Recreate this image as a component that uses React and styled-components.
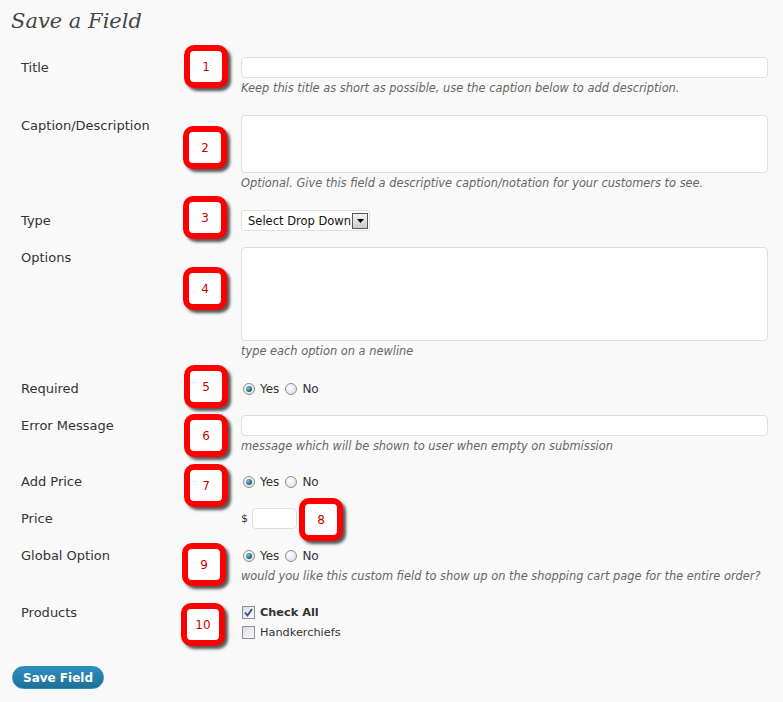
import React from 'react';
import styled, { createGlobalStyle } from 'styled-components';

const GlobalStyle = createGlobalStyle`
  html, body {
    margin: 0;
    padding: 0;
    background: #f9f9f9;
  }
  body {
    font-family: "DejaVu Sans", Verdana, sans-serif;
    color: #333;
  }
`;

const Wrap = styled.div`
  width: 783px;
  min-height: 702px;
  padding: 0 15px 0 11px;
  box-sizing: border-box;
  background: #f9f9f9;
`;

const Heading = styled.h2`
  margin: 0 0 13px;
  padding-top: 6px;
  font-family: "DejaVu Serif", Georgia, serif;
  font-style: italic;
  font-weight: normal;
  font-size: 21px;
  line-height: 30px;
  color: #464646;
`;

const Row = styled.div`
  position: relative;
  display: grid;
  grid-template-columns: 230px 1fr;
  padding: 8px 0;
`;

const Label = styled.div`
  padding: 1px 0 0 10px;
  font-size: 13px;
  line-height: 20px;
  color: #333;
`;

const Field = styled.div`
  display: flex;
  flex-direction: column;
  align-items: flex-start;
`;

const TextInput = styled.div`
  width: 100%;
  height: ${(p) => p.$h || 21}px;
  box-sizing: border-box;
  background: #fff;
  border: 1px solid #dfdfdf;
  border-radius: 4px;
`;

const Desc = styled.div`
  margin: 3px 0 ${(p) => (p.$mb ?? 3)}px;
  font-size: 11.4px;
  line-height: 15px;
  font-style: italic;
  color: #666;
`;

const Select = styled.div`
  display: flex;
  align-items: center;
  height: 21px;
  box-sizing: border-box;
  padding: 0 1px 0 6px;
  background: #fff;
  border: 1px solid #dfdfdf;
  border-radius: 3px;
  font-size: 11.5px;
  color: #111;
`;

const SelectArrow = styled.span`
  display: inline-flex;
  align-items: center;
  justify-content: center;
  width: 16px;
  height: 16px;
  margin-left: 1px;
  box-sizing: border-box;
  border: 1px solid #555;
  background: linear-gradient(#f2f2f2, #c9c9c9);
`;

const Choices = styled.div`
  display: flex;
  align-items: center;
  height: 21px;
  gap: 4px;
  font-size: 12px;
  color: #333;
`;

const Radio = styled.span`
  position: relative;
  display: inline-block;
  width: 12px;
  height: 12px;
  margin: 0 1px 0 2px;
  border-radius: 50%;
  border: 1px solid #8f8f8f;
  background: radial-gradient(circle at 40% 35%, #fff, #d8d8d8);
  box-sizing: border-box;

  &::after {
    content: '';
    display: ${(p) => (p.$on ? 'block' : 'none')};
    position: absolute;
    left: 2px;
    top: 2px;
    width: 6px;
    height: 6px;
    border-radius: 50%;
    background: radial-gradient(circle at 35% 35%, #7fc4dc, #1a5e78 70%);
  }
`;

const PriceLine = styled.div`
  display: flex;
  align-items: center;
  gap: 4px;
  font-size: 11px;
  color: #333;
`;

const SmallInput = styled.div`
  width: 45px;
  height: 21px;
  box-sizing: border-box;
  background: #fff;
  border: 1px solid #dfdfdf;
  border-radius: 4px;
`;

const CheckLine = styled.label`
  display: flex;
  align-items: center;
  gap: 5px;
  height: 20px;
  font-size: 11.3px;
  font-weight: ${(p) => (p.$bold ? 'bold' : 'normal')};
  color: #333;
`;

const Box = styled.span`
  display: inline-flex;
  align-items: center;
  justify-content: center;
  width: 13px;
  height: 13px;
  margin-left: 1px;
  box-sizing: border-box;
  border: 1px solid #8e8f9f;
  background: linear-gradient(135deg, #dcdde2, #fbfbfb);
`;

const Badge = styled.div`
  position: absolute;
  left: ${(p) => p.$x}px;
  top: ${(p) => p.$y}px;
  width: 44px;
  height: 43px;
  box-sizing: border-box;
  border: 6px solid #ff0000;
  border-radius: 10px;
  background: #fff;
  box-shadow: 3px 3px 3px rgba(0, 0, 0, 0.65);
  display: flex;
  align-items: center;
  justify-content: center;
  font-size: 12px;
  color: #cc0000;
`;

const SaveButton = styled.button`
  margin: 16px 0 0 1px;
  width: 92px;
  height: 23px;
  padding: 0;
  border: 1px solid #298cba;
  border-radius: 12px;
  background: linear-gradient(#2e8fbe, #1f6f98);
  color: #fff;
  font-family: "DejaVu Sans", Verdana, sans-serif;
  font-weight: bold;
  font-size: 12px;
  cursor: pointer;
`;

function Yn() {
  return (
    <Choices>
      <Radio $on />
      <span>Yes</span>
      <Radio />
      <span>No</span>
    </Choices>
  );
}

export default function App() {
  return (
    <Wrap>
      <GlobalStyle />
      <Heading>Save a Field</Heading>

      <Row>
        <Label>Title</Label>
        <Field>
          <TextInput />
          <Desc>Keep this title as short as possible, use the caption below to add description.</Desc>
        </Field>
        <Badge $x={173} $y={-4}>1</Badge>
      </Row>

      <Row>
        <Label>Caption/Description</Label>
        <Field>
          <TextInput $h={58} />
          <Desc>Optional. Give this field a descriptive caption/notation for your customers to see.</Desc>
        </Field>
        <Badge $x={172} $y={19}>2</Badge>
      </Row>

      <Row>
        <Label>Type</Label>
        <Field>
          <Select>
            Select Drop Down
            <SelectArrow>
              <svg width="7" height="4" viewBox="0 0 7 4">
                <path d="M0 0h7L3.5 4z" fill="#000" />
              </svg>
            </SelectArrow>
          </Select>
        </Field>
        <Badge $x={172} $y={-6}>3</Badge>
      </Row>

      <Row>
        <Label>Options</Label>
        <Field>
          <TextInput $h={94} />
          <Desc>type each option on a newline</Desc>
        </Field>
        <Badge $x={172} $y={28}>4</Badge>
      </Row>

      <Row>
        <Label>Required</Label>
        <Field>
          <Yn />
        </Field>
        <Badge $x={173} $y={-5}>5</Badge>
      </Row>

      <Row>
        <Label>Error Message</Label>
        <Field>
          <TextInput />
          <Desc $mb={1}>message which will be shown to user when empty on submission</Desc>
        </Field>
        <Badge $x={173} $y={7}>6</Badge>
      </Row>

      <Row>
        <Label>Add Price</Label>
        <Field>
          <Yn />
        </Field>
        <Badge $x={173} $y={1}>7</Badge>
      </Row>

      <Row>
        <Label>Price</Label>
        <Field>
          <PriceLine>
            <span>$</span>
            <SmallInput />
          </PriceLine>
        </Field>
        <Badge $x={288} $y={-2}>8</Badge>
      </Row>

      <Row>
        <Label>Global Option</Label>
        <Field>
          <Yn />
          <Desc $mb={2}>would you like this custom field to show up on the shopping cart page for the entire order?</Desc>
        </Field>
        <Badge $x={171} $y={6}>9</Badge>
      </Row>

      <Row>
        <Label>Products</Label>
        <Field>
          <CheckLine $bold>
            <Box>
              <svg width="9" height="9" viewBox="0 0 9 9">
                <path d="M1 4.5l2.5 3L8 1" fill="none" stroke="#3a4c8e" strokeWidth="1.8" />
              </svg>
            </Box>
            Check All
          </CheckLine>
          <CheckLine>
            <Box />
            Handkerchiefs
          </CheckLine>
        </Field>
        <Badge $x={170} $y={9}>10</Badge>
      </Row>

      <SaveButton>Save Field</SaveButton>
    </Wrap>
  );
}
